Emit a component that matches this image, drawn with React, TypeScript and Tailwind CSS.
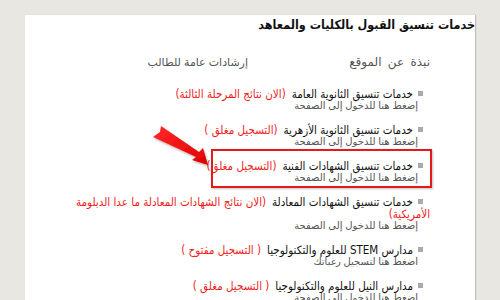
const items = [
  { title: "خدمات تنسيق الثانوية العامة", status: "(الان نتائج المرحلة الثالثة)", sub: "إضغط هنا للدخول إلى الصفحة" },
  { title: "خدمات تنسيق الثانوية الأزهرية", status: "(التسجيل مغلق )", sub: "إضغط هنا للدخول إلى الصفحة" },
  { title: "خدمات تنسيق الشهادات الفنية", status: "(التسجيل مغلق)", sub: "إضغط هنا للدخول إلى الصفحة" },
  { title: "خدمات تنسيق الشهادات المعادلة", status: "(الان نتائج الشهادات المعادلة ما عدا الدبلومة", more: "الأمريكية)", sub: "إضغط هنا للدخول إلى الصفحة" },
  { title: "مدارس STEM للعلوم والتكنولوجيا", status: "( التسجيل مفتوح )", sub: "اضغط هنا لتسجيل رغباتك" },
  { title: "مدارس النيل للعلوم والتكنولوجيا", status: "( التسجيل مغلق )", sub: "إضغط هنا للدخول إلى الصفحة" },
];

export default function App() {
  return (
    <div className="relative w-[500px] h-[300px] overflow-hidden bg-[#e8e7e2] pt-[15px] pl-[25px] font-['Liberation_Sans','DejaVu_Sans',sans-serif]">
      <div dir="rtl" className="w-[450px] h-[300px] bg-white shadow-[1px_0_1px_rgba(0,0,0,0.18)]">
        <h1 className="text-[12.5px] leading-[20px] font-bold text-[#111] whitespace-nowrap font-['DejaVu_Sans_Condensed','DejaVu_Sans',sans-serif] font-stretch-condensed">
          خدمات تنسيق القبول بالكليات والمعاهد
        </h1>

        <div className="flex mt-[20px] pr-[45px] text-[11px] leading-[14px] text-[#555]">
          <div className="w-[182px] text-[12px] [word-spacing:3px]">نبذة عن الموقع</div>
          <div>إرشادات عامة للطالب</div>
        </div>

        <ul className="mt-[19px] pr-[45px] flex flex-col gap-[12px]">
          {items.map((it) => (
            <li key={it.title} className="w-[400px]">
              <p className="text-[11.5px] leading-[12px] text-[#111] font-['DejaVu_Sans_Condensed','DejaVu_Sans',sans-serif] font-stretch-condensed">
                <span className="inline-block w-[5px] h-[5px] bg-[#aaa] mr-[7px] ml-[5px] align-[2px]"></span>
                {it.title}
                <span className="mr-[6px] text-[#f01c1c]">
                  {it.status}
                  {it.more && (
                    <>
                      <br />
                      {it.more}
                    </>
                  )}
                </span>
              </p>
              <p className="pr-[12px] text-[10px] leading-[12px] text-[#555]">{it.sub}</p>
            </li>
          ))}
        </ul>
      </div>

      <div className="absolute left-[211px] top-[149px] w-[221px] h-[39px] border-2 border-[#e3191c] shadow-[1px_1px_2px_rgba(0,0,0,0.25)]"></div>

      <svg className="absolute left-0 top-0" width="500" height="300" viewBox="0 0 500 300">
        <defs>
          <linearGradient id="ar" x1="0" y1="0" x2="1" y2="1">
            <stop offset="0" stopColor="#ff2a2a" />
            <stop offset="1" stopColor="#e00000" />
          </linearGradient>
          <filter id="sh" x="-20%" y="-20%" width="140%" height="140%">
            <feDropShadow dx="1" dy="1.5" stdDeviation="1" floodColor="#000" floodOpacity="0.3" />
          </filter>
        </defs>
        <polygon
          points="161,126 199,152 203,148 208,165 192,160 196,157 153,137 160,132"
          fill="url(#ar)"
          filter="url(#sh)"
        />
      </svg>
    </div>
  );
}
